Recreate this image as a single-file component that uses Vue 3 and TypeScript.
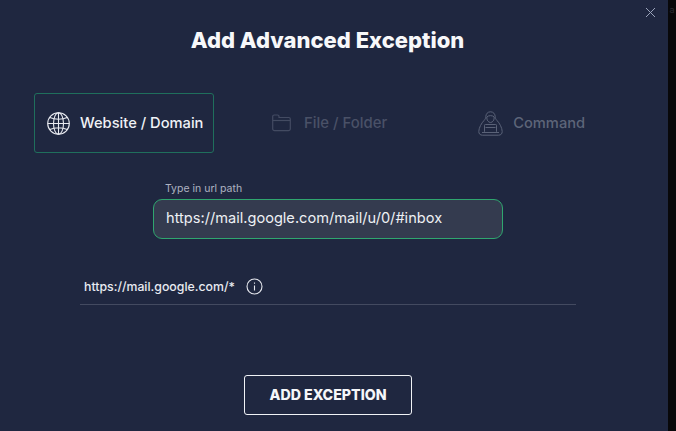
<script setup lang="ts">
const path = 'https://mail.google.com/mail/u/0/#inbox'
const masked = 'https://mail.google.com/*'
</script>

<template>
  <div class="page">
    <main class="modal">
      <button class="close" aria-label="Close">
        <svg width="11" height="11" viewBox="0 0 11 11"><path d="M1 1l9 9M10 1l-9 9" stroke="#9aa3ba" stroke-width="1" fill="none" /></svg>
      </button>
      <h1 class="title">Add Advanced Exception</h1>
      <div class="tabs">
        <div class="tab tab-active">
          <svg width="23" height="23" viewBox="0 0 23 23" fill="none" stroke="#e8eaf0" stroke-width="1.1">
            <circle cx="11.500" cy="11.500" r="10.800" />
            <ellipse cx="11.500" cy="11.500" rx="5" ry="10.800" />
            <path d="M11.500 .7v21.600M.7 11.500h21.600M2.800 5.500c5 2.300 12.400 2.300 17.400 0M2.800 17.500c5-2.300 12.400-2.300 17.400 0" />
          </svg>
          <span>Website / Domain</span>
        </div>
        <div class="tab tab-file">
          <svg width="19" height="18" viewBox="0 0 19 18" fill="none" stroke="#434b62" stroke-width="1.200">
            <path d="M.7 14.800V2.500A1.500 1.500 0 0 1 2.200 1h3.300a1.500 1.500 0 0 1 1.500 1.500V3.500h9.800a1.500 1.500 0 0 1 1.500 1.500v9.800a1.800 1.800 0 0 1-1.800 1.800H2.500a1.800 1.800 0 0 1-1.800-1.800z" />
            <path d="M.7 6.500h17.600" />
          </svg>
          <span>File / Folder</span>
        </div>
        <div class="tab tab-cmd">
          <svg width="25" height="25" viewBox="0 0 25 25" fill="none" stroke="#5a6278" stroke-width="1">
            <path d="M12.500 .8C9.500 .8 8 3 7.800 5.500c-.1 1.700-.6 2.800-1.800 4C3.500 12 .8 17 .8 20.500c0 2.300 1.300 3.700 3.700 3.700h16c2.400 0 3.700-1.400 3.700-3.700 0-3.500-2.700-8.500-5.200-11-1.200-1.200-1.700-2.300-1.800-4C17 3 15.500 .8 12.500 .8z" />
            <path d="M8.800 6c1.500-1.800 6-1.800 7.400 0 .3 3-1.500 5.500-3.700 5.500S8.500 9 8.800 6z" />
            <rect x="6.500" y="13.500" width="12" height="8" rx=".8" />
            <path d="M4 21.500h17M7.500 16.500h10" />
          </svg>
          <span>Command</span>
        </div>
      </div>
      <div class="field">
        <label class="field-label">Type in url path</label>
        <div class="input">{{ path }}</div>
      </div>
      <div class="result">
        <span class="result-text">{{ masked }}</span>
        <svg width="17" height="17" viewBox="0 0 17 17" fill="none" stroke="#e6e8ee" stroke-width="1.100">
          <circle cx="8.500" cy="8.500" r="7.500" />
          <path d="M8.500 7.500v5M8.500 4.500v1.300" />
        </svg>
      </div>
      <button class="submit">ADD EXCEPTION</button>
    </main>
    <aside class="strip"><span class="strip-text">a</span></aside>
  </div>
</template>

<style>
html, body { margin: 0; background: #08080a; }
</style>

<style scoped>
.page {
  display: flex;
  width: 676px;
  height: 431px;
  overflow: hidden;
  font-family: Inter, "Liberation Sans", sans-serif;
}
.modal {
  position: relative;
  width: 668px;
  height: 431px;
  box-sizing: border-box;
  background: #1f2740;
  padding-top: 26px;
  display: flex;
  flex-direction: column;
}
.close {
  position: absolute;
  top: 7px;
  right: 12px;
  padding: 0;
  border: 0;
  background: none;
  line-height: 0;
}
.title {
  margin: 0 13px 0 0;
  text-align: center;
  font-size: 22px;
  line-height: 28px;
  font-weight: 800;
  color: #f7f8fa;
}
.tabs {
  display: flex;
  align-items: center;
  margin: 39px 0 0 34px;
  height: 60px;
}
.tab {
  display: flex;
  align-items: center;
  font-size: 14.700px;
  line-height: 18px;
  font-weight: 500;
  color: #4a5167;
}
.tab-active {
  box-sizing: border-box;
  width: 180px;
  height: 60px;
  padding-left: 12px;
  gap: 10px;
  color: #f0f2f6;
  border: 1px solid #1f6f5c;
  border-radius: 3px;
}
.tab-active > span { margin-top: -1px; }
.tab-file { margin-left: 58px; gap: 13px; font-size: 14.900px; }
.tab-cmd { margin-left: 91px; gap: 10px; color: #5d6579; }
.field {
  margin: 29px 0 0 153px;
  width: 350px;
}
.field-label {
  display: block;
  margin-left: 12px;
  font-size: 10.500px;
  line-height: 13px;
  color: #aeb3c1;
}
.input {
  box-sizing: border-box;
  height: 40px;
  margin-top: 4px;
  padding: 0 12px 2px;
  display: flex;
  align-items: center;
  background: #343b4f;
  border: 1px solid #2fa66f;
  border-radius: 9px;
  font-size: 14.600px;
  color: #eef0f4;
}
.result {
  box-sizing: border-box;
  width: 496px;
  height: 39px;
  margin: 27px 0 0 80px;
  padding: 2px 4px 0;
  display: flex;
  align-items: center;
  gap: 11px;
  border-bottom: 1px solid #434a60;
}
.result-text {
  font-size: 12.300px;
  font-weight: 500;
  color: #e8eaf0;
}
.submit {
  width: 168px;
  height: 40px;
  margin: 70px 0 0 244px;
  padding: 0 0 2px;
  background: transparent;
  border: 1.500px solid #f0f2f6;
  border-radius: 3px;
  color: #f5f6f9;
  font-family: inherit;
  font-size: 14.200px;
  font-weight: 800;
}
.strip {
  flex: 1;
  overflow: hidden;
}
.strip-text {
  display: block;
  margin-top: 4px;
  text-align: center;
  font-size: 9px;
  color: #2b2d33;
}
</style>
